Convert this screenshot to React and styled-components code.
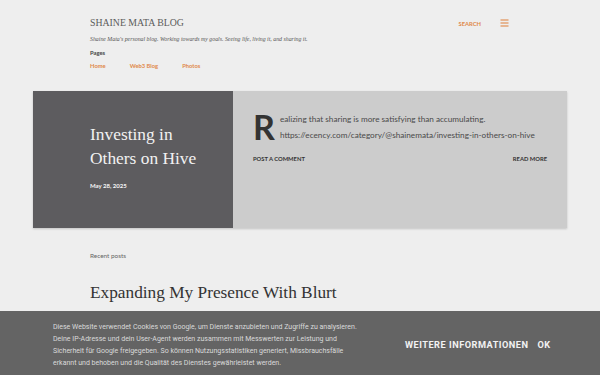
import React from 'react';
import styled, { createGlobalStyle } from 'styled-components';

const GlobalStyle = createGlobalStyle`
  html, body {
    margin: 0;
    padding: 0;
    background: #eeeeee;
  }
  body {
    font-family: Lato, "Liberation Sans", sans-serif;
    width: 600px;
    height: 375px;
    overflow: hidden;
  }
`;

const links = ['Home', 'Web3 Blog', 'Photos'];

const cookieLines = [
  'Diese Website verwendet Cookies von Google, um Dienste anzubieten und Zugriffe zu analysieren.',
  'Deine IP-Adresse und dein User-Agent werden zusammen mit Messwerten zur Leistung und',
  'Sicherheit für Google freigegeben. So können Nutzungsstatistiken generiert, Missbrauchsfälle',
  'erkannt und behoben und die Qualität des Dienstes gewährleistet werden.',
];

export default function App() {
  return (
    <Page>
      <GlobalStyle />
      <Header>
        <TopRow>
          <BlogTitle>Shaine Mata Blog</BlogTitle>
          <Tools>
            <SearchLabel>Search</SearchLabel>
            <svg width="9" height="8" viewBox="0 0 9 8">
              <g stroke="#e0894a" strokeWidth="1.1">
                <line x1="0.5" y1="1" x2="8.5" y2="1" />
                <line x1="0.5" y1="4" x2="8.5" y2="4" />
                <line x1="0.5" y1="7" x2="8.5" y2="7" />
              </g>
            </svg>
          </Tools>
        </TopRow>
        <Tagline>Shaine Mata's personal blog. Working towards my goals. Seeing life, living it, and sharing it.</Tagline>
        <PagesLabel>Pages</PagesLabel>
        <NavRow>
          {links.map((l) => (
            <NavLink key={l}>{l}</NavLink>
          ))}
        </NavRow>
      </Header>

      <FeatureCard>
        <DarkSide>
          <PostTitle>Investing in<br />Others on Hive</PostTitle>
          <PostDate>May 28, 2025</PostDate>
        </DarkSide>
        <LightSide>
          <Snippet>
            <DropCap>R</DropCap>
            <SnippetLine>ealizing that sharing is more satisfying than accumulating.</SnippetLine>
            <SnippetLine>https://ecency.com/category/@shainemata/investing-in-others-on-hive</SnippetLine>
          </Snippet>
          <ActionRow>
            <Action>Post a Comment</Action>
            <Action>Read more</Action>
          </ActionRow>
        </LightSide>
      </FeatureCard>

      <Recent>Recent posts</Recent>
      <NextTitle>Expanding My Presence With Blurt</NextTitle>

      <CookieBar>
        <CookieText>
          {cookieLines.map((l) => (
            <div key={l}>{l}</div>
          ))}
        </CookieText>
        <CookieButtons>
          <CookieButton>Weitere Informationen</CookieButton>
          <CookieButton>OK</CookieButton>
        </CookieButtons>
      </CookieBar>
    </Page>
  );
}

const Page = styled.div`
  width: 600px;
  height: 375px;
  position: relative;
`;

const Header = styled.header`
  padding: 17px 91px 0 90px;
`;

const TopRow = styled.div`
  display: flex;
  justify-content: space-between;
  align-items: center;
  height: 12px;
`;

const BlogTitle = styled.div`
  font-family: "Liberation Serif", serif;
  font-size: 9.8px;
  line-height: 12px;
  text-transform: uppercase;
  color: #5b5b5b;
`;

const Tools = styled.div`
  display: flex;
  align-items: center;
  gap: 19px;
`;

const SearchLabel = styled.span`
  font-size: 5.8px;
  font-weight: 700;
  text-transform: uppercase;
  color: #e0894a;
`;

const Tagline = styled.div`
  margin-top: 6px;
  font-family: "Liberation Serif", serif;
  font-style: italic;
  font-size: 5.85px;
  line-height: 8px;
  color: #555;
`;

const PagesLabel = styled.div`
  margin-top: 6px;
  font-size: 5.8px;
  font-weight: 700;
  line-height: 8px;
  color: #444;
`;

const NavRow = styled.nav`
  display: flex;
  gap: 24px;
  margin-top: 5px;
`;

const NavLink = styled.a`
  font-size: 5.8px;
  font-weight: 700;
  line-height: 8px;
  color: #e0894a;
`;

const FeatureCard = styled.section`
  margin: 21px 33px 0 33px;
  height: 137px;
  display: grid;
  grid-template-columns: 200px 1fr;
  box-shadow: 0 1px 2px rgba(0, 0, 0, 0.18);
`;

const DarkSide = styled.div`
  background: #5d5c5f;
  padding: 31px 0 0 57px;
`;

const PostTitle = styled.h2`
  margin: 0;
  font-family: "Liberation Serif", serif;
  font-weight: 400;
  font-size: 17.4px;
  line-height: 24px;
  color: #f2f2f2;
`;

const PostDate = styled.div`
  margin-top: 12px;
  font-size: 6px;
  font-weight: 700;
  line-height: 8px;
  color: #f5f5f5;
`;

const LightSide = styled.div`
  background: #cccccc;
  padding: 20px 20px 0 20px;
`;

const Snippet = styled.div`
  display: flow-root;
  font-size: 8.2px;
  line-height: 16px;
  color: #4a4a4a;
`;

const DropCap = styled.span`
  float: left;
  font-size: 34px;
  font-weight: 700;
  line-height: 32px;
  color: #333;
  margin-right: 5px;
`;

const SnippetLine = styled.div`
  white-space: nowrap;
`;

const ActionRow = styled.div`
  display: flex;
  justify-content: space-between;
  margin-top: 12px;
`;

const Action = styled.span`
  font-size: 5.8px;
  font-weight: 700;
  line-height: 8px;
  text-transform: uppercase;
  color: #333;
`;

const Recent = styled.div`
  margin: 24px 0 0 90px;
  font-size: 6.4px;
  line-height: 8px;
  color: #666;
`;

const NextTitle = styled.h2`
  margin: 21px 0 0 90px;
  font-family: "Liberation Serif", serif;
  font-weight: 400;
  font-size: 17.3px;
  line-height: 24px;
  color: #333;
`;

const CookieBar = styled.div`
  position: fixed;
  left: 0;
  right: 0;
  bottom: 0;
  height: 64px;
  background: #646464;
  display: flex;
  align-items: center;
  padding: 3px 0 0 53px;
  box-sizing: border-box;
`;

const CookieText = styled.div`
  width: 330px;
  font-family: Roboto, "Liberation Sans", sans-serif;
  font-size: 7px;
  line-height: 12px;
  color: #dadada;
  white-space: nowrap;
`;

const CookieButtons = styled.div`
  display: flex;
  gap: 9px;
  margin-left: 22px;
`;

const CookieButton = styled.span`
  font-family: Roboto, "Liberation Sans", sans-serif;
  font-size: 9.2px;
  font-weight: 700;
  letter-spacing: 0.5px;
  text-transform: uppercase;
  color: #f2f2f2;
`;
